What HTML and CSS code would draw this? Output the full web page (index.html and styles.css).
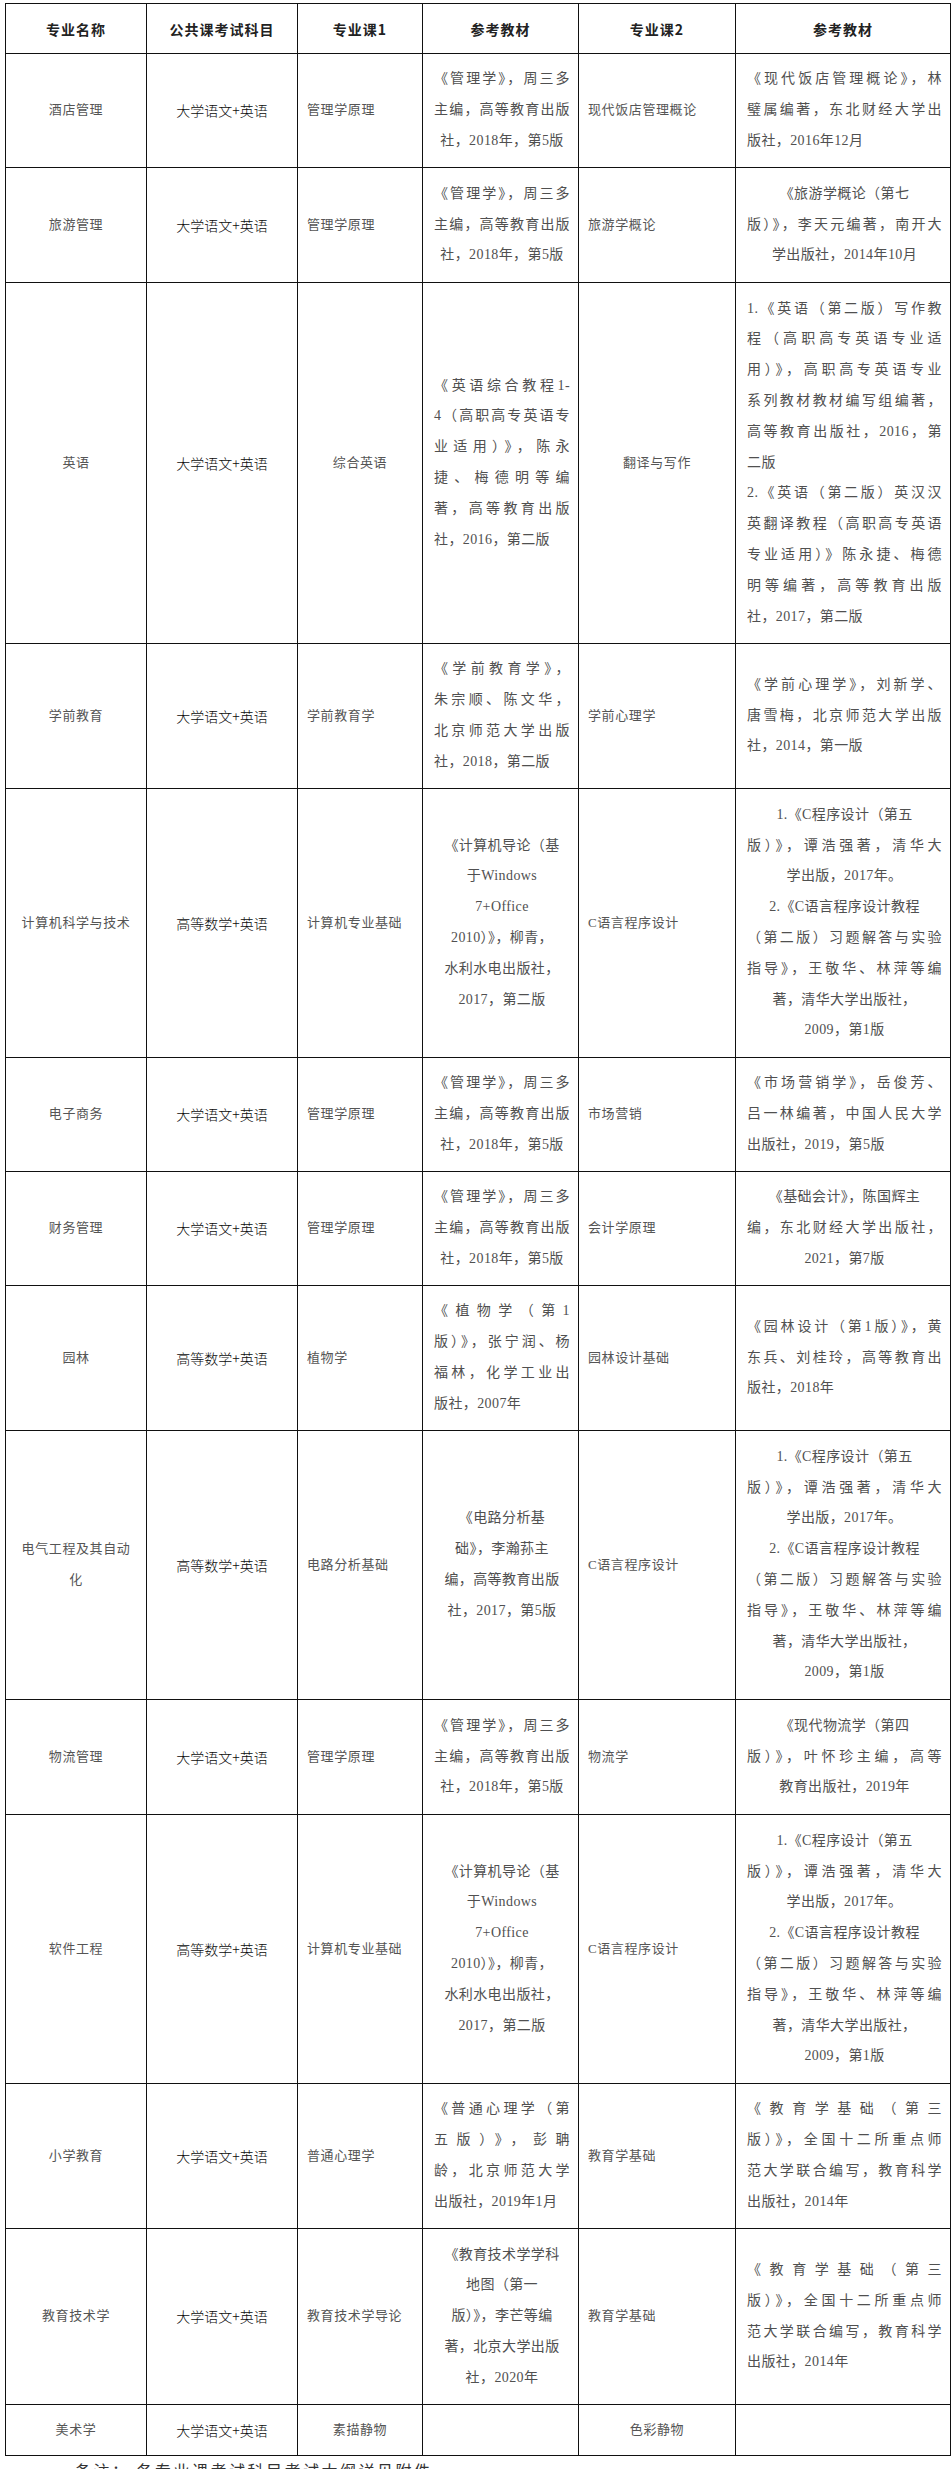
FILE: index.html
```html
<!DOCTYPE html>
<html lang="zh">
<head>
<meta charset="utf-8">
<title>专业课考试科目</title>
<link rel="stylesheet" href="styles.css">
</head>
<body>
<table class="tbl">
<colgroup>
<col class="w1"><col class="w2"><col class="w3"><col class="w4"><col class="w5"><col class="w6">
</colgroup>
<tr class="h50">
<th>专业名称</th><th>公共课考试科目</th><th>专业课1</th><th>参考教材</th><th>专业课2</th><th>参考教材</th>
</tr>
<tr class="h114">
<td class="m">酒店管理</td><td class="p">大学语文+英语</td><td class="s">管理学原理</td>
<td class="b c"><div class="l j">《管理学》，周三多</div><div class="l j">主编，高等教育出版</div><div class="l">社，2018年，第5版</div></td>
<td class="s">现代饭店管理概论</td>
<td class="b"><div class="l j">《现代饭店管理概论》，林</div><div class="l j">璧属编著，东北财经大学出</div><div class="l">版社，2016年12月</div></td>
</tr>
<tr class="h115">
<td class="m">旅游管理</td><td class="p">大学语文+英语</td><td class="s">管理学原理</td>
<td class="b c"><div class="l j">《管理学》，周三多</div><div class="l j">主编，高等教育出版</div><div class="l">社，2018年，第5版</div></td>
<td class="s">旅游学概论</td>
<td class="b c"><div class="l">《旅游学概论（第七</div><div class="l j">版）》，李天元编著，南开大</div><div class="l">学出版社，2014年10月</div></td>
</tr>
<tr class="h361">
<td class="m">英语</td><td class="p">大学语文+英语</td><td class="s c">综合英语</td>
<td class="b"><div class="l j">《英语综合教程1-</div><div class="l j">4（高职高专英语专</div><div class="l j">业适用）》，陈永</div><div class="l j">捷、梅德明等编</div><div class="l j">著，高等教育出版</div><div class="l">社，2016，第二版</div></td>
<td class="s c">翻译与写作</td>
<td class="b"><div class="l j">1.《英语（第二版）写作教</div><div class="l j">程（高职高专英语专业适</div><div class="l j">用）》，高职高专英语专业</div><div class="l j">系列教材教材编写组编著，</div><div class="l j">高等教育出版社，2016，第</div><div class="l">二版</div><div class="l j">2.《英语（第二版）英汉汉</div><div class="l j">英翻译教程（高职高专英语</div><div class="l j">专业适用）》陈永捷、梅德</div><div class="l j">明等编著，高等教育出版</div><div class="l">社，2017，第二版</div></td>
</tr>
<tr class="h145">
<td class="m">学前教育</td><td class="p">大学语文+英语</td><td class="s">学前教育学</td>
<td class="b"><div class="l j">《学前教育学》，</div><div class="l j">朱宗顺、陈文华，</div><div class="l j">北京师范大学出版</div><div class="l">社，2018，第二版</div></td>
<td class="s">学前心理学</td>
<td class="b"><div class="l j">《学前心理学》，刘新学、</div><div class="l j">唐雪梅，北京师范大学出版</div><div class="l">社，2014，第一版</div></td>
</tr>
<tr class="h269">
<td class="m">计算机科学与技术</td><td class="p">高等数学+英语</td><td class="s">计算机专业基础</td>
<td class="b c"><div class="l">《计算机导论（基</div><div class="l">于Windows</div><div class="l">7+Office</div><div class="l">2010）》，柳青，</div><div class="l">水利水电出版社，</div><div class="l">2017，第二版</div></td>
<td class="s">C语言程序设计</td>
<td class="b c"><div class="l">1.《C程序设计（第五</div><div class="l j">版）》，谭浩强著，清华大</div><div class="l">学出版，2017年。</div><div class="l">2.《C语言程序设计教程</div><div class="l j">（第二版）习题解答与实验</div><div class="l j">指导》，王敬华、林萍等编</div><div class="l">著，清华大学出版社，</div><div class="l">2009，第1版</div></td>
</tr>
<tr class="h114">
<td class="m">电子商务</td><td class="p">大学语文+英语</td><td class="s">管理学原理</td>
<td class="b c"><div class="l j">《管理学》，周三多</div><div class="l j">主编，高等教育出版</div><div class="l">社，2018年，第5版</div></td>
<td class="s">市场营销</td>
<td class="b"><div class="l j">《市场营销学》，岳俊芳、</div><div class="l j">吕一林编著，中国人民大学</div><div class="l">出版社，2019，第5版</div></td>
</tr>
<tr class="h114">
<td class="m">财务管理</td><td class="p">大学语文+英语</td><td class="s">管理学原理</td>
<td class="b c"><div class="l j">《管理学》，周三多</div><div class="l j">主编，高等教育出版</div><div class="l">社，2018年，第5版</div></td>
<td class="s">会计学原理</td>
<td class="b c"><div class="l">《基础会计》，陈国辉主</div><div class="l j">编，东北财经大学出版社，</div><div class="l">2021，第7版</div></td>
</tr>
<tr class="h145">
<td class="m">园林</td><td class="p">高等数学+英语</td><td class="s">植物学</td>
<td class="b"><div class="l j">《植物学（第1</div><div class="l j">版）》，张宁润、杨</div><div class="l j">福林，化学工业出</div><div class="l">版社，2007年</div></td>
<td class="s">园林设计基础</td>
<td class="b"><div class="l j">《园林设计（第1版）》，黄</div><div class="l j">东兵、刘桂玲，高等教育出</div><div class="l">版社，2018年</div></td>
</tr>
<tr class="h269">
<td class="m"><div class="l">电气工程及其自动</div><div class="l">化</div></td><td class="p">高等数学+英语</td><td class="s">电路分析基础</td>
<td class="b c"><div class="l">《电路分析基</div><div class="l">础》，李瀚荪主</div><div class="l">编，高等教育出版</div><div class="l">社，2017，第5版</div></td>
<td class="s">C语言程序设计</td>
<td class="b c"><div class="l">1.《C程序设计（第五</div><div class="l j">版）》，谭浩强著，清华大</div><div class="l">学出版，2017年。</div><div class="l">2.《C语言程序设计教程</div><div class="l j">（第二版）习题解答与实验</div><div class="l j">指导》，王敬华、林萍等编</div><div class="l">著，清华大学出版社，</div><div class="l">2009，第1版</div></td>
</tr>
<tr class="h115">
<td class="m">物流管理</td><td class="p">大学语文+英语</td><td class="s">管理学原理</td>
<td class="b c"><div class="l j">《管理学》，周三多</div><div class="l j">主编，高等教育出版</div><div class="l">社，2018年，第5版</div></td>
<td class="s">物流学</td>
<td class="b c"><div class="l">《现代物流学（第四</div><div class="l j">版）》，叶怀珍主编，高等</div><div class="l">教育出版社，2019年</div></td>
</tr>
<tr class="h269">
<td class="m">软件工程</td><td class="p">高等数学+英语</td><td class="s">计算机专业基础</td>
<td class="b c"><div class="l">《计算机导论（基</div><div class="l">于Windows</div><div class="l">7+Office</div><div class="l">2010）》，柳青，</div><div class="l">水利水电出版社，</div><div class="l">2017，第二版</div></td>
<td class="s">C语言程序设计</td>
<td class="b c"><div class="l">1.《C程序设计（第五</div><div class="l j">版）》，谭浩强著，清华大</div><div class="l">学出版，2017年。</div><div class="l">2.《C语言程序设计教程</div><div class="l j">（第二版）习题解答与实验</div><div class="l j">指导》，王敬华、林萍等编</div><div class="l">著，清华大学出版社，</div><div class="l">2009，第1版</div></td>
</tr>
<tr class="h145">
<td class="m">小学教育</td><td class="p">大学语文+英语</td><td class="s">普通心理学</td>
<td class="b"><div class="l j">《普通心理学（第</div><div class="l j">五版）》，彭聃</div><div class="l j">龄，北京师范大学</div><div class="l">出版社，2019年1月</div></td>
<td class="s">教育学基础</td>
<td class="b"><div class="l j">《教育学基础（第三</div><div class="l j">版）》，全国十二所重点师</div><div class="l j">范大学联合编写，教育科学</div><div class="l">出版社，2014年</div></td>
</tr>
<tr class="h176">
<td class="m">教育技术学</td><td class="p">大学语文+英语</td><td class="s">教育技术学导论</td>
<td class="b c"><div class="l">《教育技术学学科</div><div class="l">地图（第一</div><div class="l">版）》，李芒等编</div><div class="l">著，北京大学出版</div><div class="l">社，2020年</div></td>
<td class="s">教育学基础</td>
<td class="b"><div class="l j">《教育学基础（第三</div><div class="l j">版）》，全国十二所重点师</div><div class="l j">范大学联合编写，教育科学</div><div class="l">出版社，2014年</div></td>
</tr>
<tr class="h51">
<td class="m">美术学</td><td class="p">大学语文+英语</td><td class="s c">素描静物</td>
<td class="b"></td>
<td class="s c">色彩静物</td>
<td class="b"></td>
</tr>
</table>
<p class="note">备注：&nbsp;各专业课考试科目考试大纲详见附件</p>
</body>
</html>
```

FILE: styles.css
```css
html, body {
  margin: 0;
  padding: 0;
  background: #ffffff;
}

body {
  font-family: "Liberation Serif", "Noto Sans CJK SC", serif;
  color: #333333;
}

.tbl {
  border-collapse: collapse;
  table-layout: fixed;
  width: 945px;
  margin: 3px 0 0 5px;
}

.w1 { width: 141px; }
.w2 { width: 151px; }
.w3 { width: 125px; }
.w4 { width: 156px; }
.w5 { width: 157px; }
.w6 { width: 215px; }

.tbl th,
.tbl td {
  border: 1px solid #111111;
  padding: 0;
  vertical-align: middle;
}

.tbl th {
  font-family: "Noto Sans CJK SC", sans-serif;
  font-weight: bold;
  font-size: 14px;
  letter-spacing: 1px;
  color: #222222;
  text-align: center;
  line-height: 20px;
}

.h50 { height: 50px; }
.h51 { height: 51px; }
.h114 { height: 114px; }
.h115 { height: 115px; }
.h145 { height: 145px; }
.h176 { height: 176px; }
.h269 { height: 269px; }
.h361 { height: 361px; }

.m {
  text-align: center;
  font-size: 13px;
  letter-spacing: 0.6px;
  line-height: 30.8px;
  color: #555555;
  white-space: nowrap;
}

.p {
  text-align: center;
  font-family: "Noto Sans CJK SC", sans-serif;
  font-weight: 300;
  font-size: 14px;
  line-height: 30.8px;
  color: #0a0a0a;
}

.s {
  text-align: left;
  padding-left: 9px !important;
  font-size: 13px;
  letter-spacing: 0.6px;
  line-height: 30.8px;
  color: #555555;
  white-space: nowrap;
}

.s.c {
  text-align: center;
  padding-left: 0 !important;
}

.b {
  padding: 0 8px 0 11px !important;
  font-size: 14px;
  letter-spacing: 0.4px;
  line-height: 30.8px;
  color: #505050;
  text-align: left;
}

.b.c {
  text-align: center;
}

.l {
  white-space: nowrap;
}

.l.j {
  text-align: justify;
  text-align-last: justify;
}

.note {
  margin: 2px 0 0 75px;
  font-family: "Noto Sans CJK SC", sans-serif;
  font-size: 16px;
  letter-spacing: 2.5px;
  line-height: 24px;
  color: #333333;
}
```
